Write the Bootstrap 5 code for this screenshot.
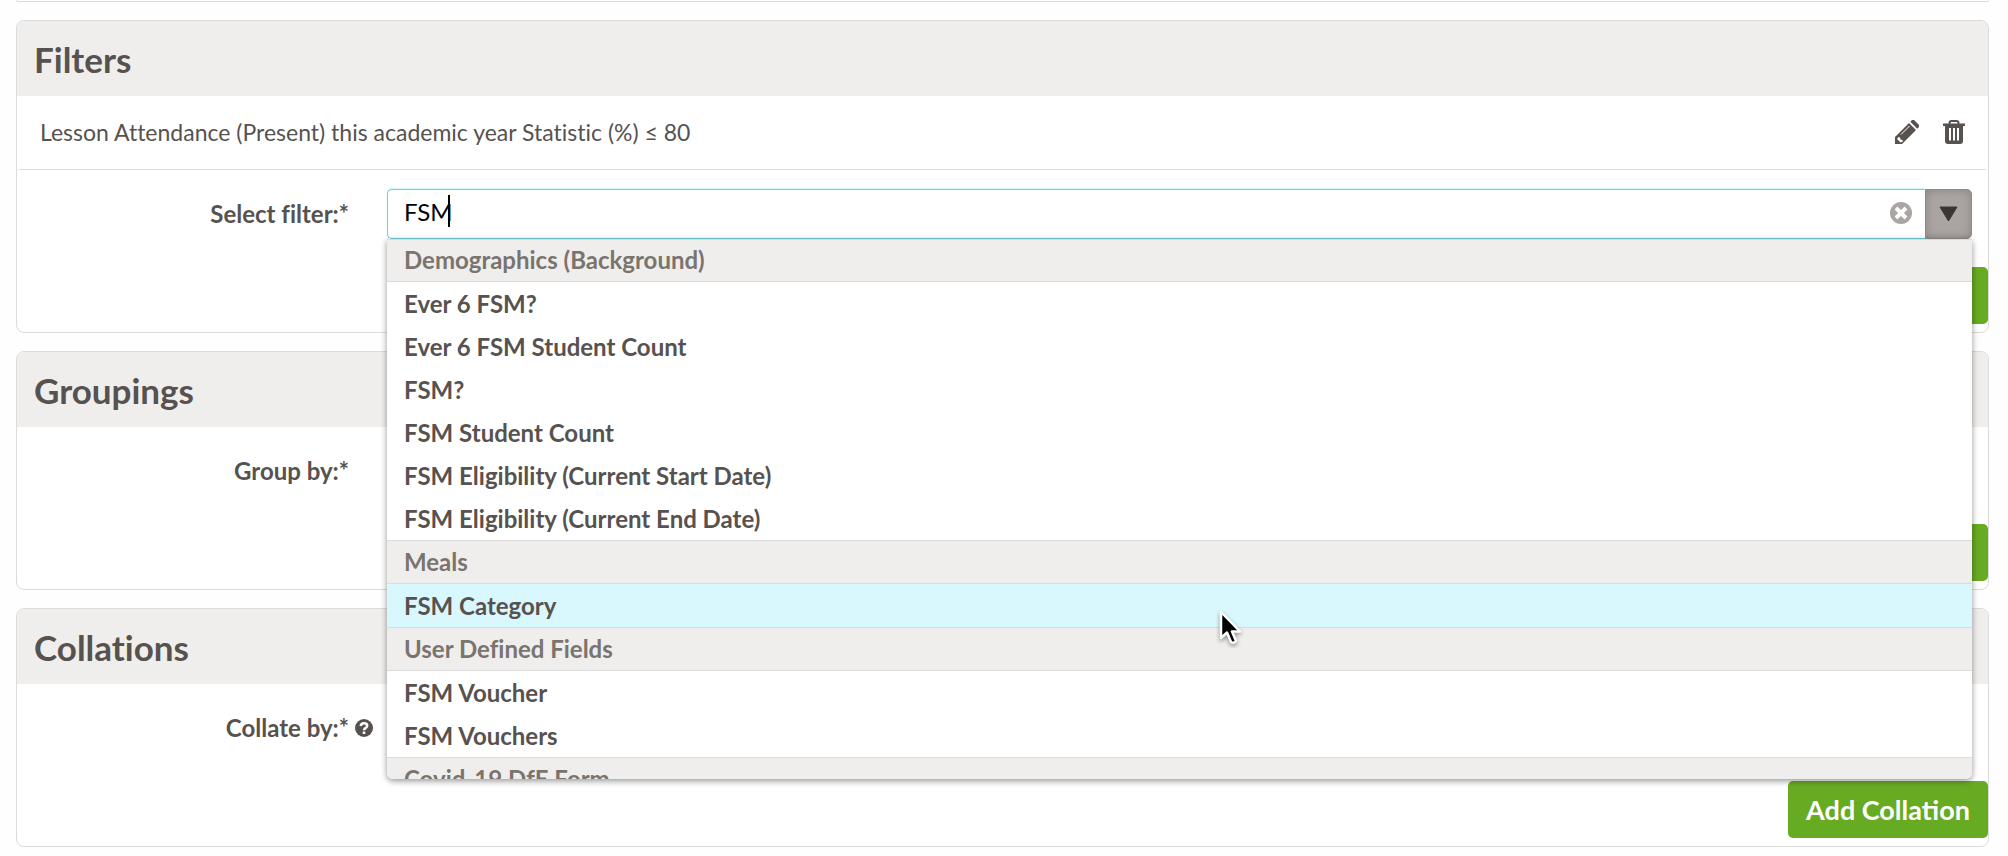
<!DOCTYPE html>
<html lang="en">
<head>
<meta charset="utf-8">
<meta name="viewport" content="width=device-width, initial-scale=1">
<title>Filters</title>
<link href="https://cdn.jsdelivr.net/npm/bootstrap@5.3.0/dist/css/bootstrap.min.css" rel="stylesheet">
<style>
:root { --ink: #57524f; --line: #dcdbdb; --panel: #efeeec; --green: #67ab22; }
body { font-family: Lato, "Open Sans", sans-serif; font-size: 24px; line-height: 32px; font-variant-ligatures: none; color: var(--ink); background: #fefefe; }
.page { padding: 0 19px 0 16px; }
.panel { border: 1px solid var(--line); border-radius: 8px; background: #fff; margin-bottom: 18px; }
.panel-cut { height: 2px; border-top: 0; }
.panel-title { background: var(--panel); border: 0; height: 75px; padding: 0 17px; border-radius: 7px 7px 0 0 !important; }
.panel-title h2 { font-size: 35px; line-height: 44px; font-weight: 700; margin: 0; }
.applied { height: 74px; margin: 0 2px; padding: 0 21px 2px; border-bottom: 1px solid var(--line); font-size: 23px; }
.icon-btn { border: 0; background: none; padding: 0; color: var(--ink); line-height: 0; }
.field { padding: 19px 16px 28px 0; }
.field-label { width: 332px; font-weight: 700; text-align: right; }
.field-aside { width: 38px; padding-left: 6px; line-height: 0; }
.combo { height: 50px; }
.combo input, .plain-select { width: 100%; height: 50px; border: 1px solid #6fcfdb; border-radius: 5px 0 0 5px; padding: 0 16px 5px; color: #000; background: #fff; font-size: 24px; outline: 0; }
.combo input { border-right: 0; box-shadow: 0 -1px 2px #c4f6fb; }
.plain-select { border-color: var(--line); border-radius: 5px; }
.caret-bar { position: absolute; left: 61px; top: 6px; width: 2px; height: 32px; background: #000; }
.clear-btn { position: absolute; right: 60px; top: 13px; }
.toggle-btn { width: 47px; flex: none; border: 1px solid #918b88; border-radius: 0 5px 5px 0; background: #aaa5a2; box-shadow: inset 0 0 10px #8a8481; padding: 0; line-height: 0; }
.menu { position: absolute; z-index: 5; top: 100%; left: 0; right: 0; height: 540px; overflow: hidden; background: #fff; border-radius: 0 0 6px 6px; box-shadow: 0 2px 6px rgba(0,0,0,.42); font-weight: 700; }
.menu li { height: 43px; padding: 0 17px; line-height: 44px; }
.menu .group { height: 44px; line-height: 41px; background: var(--panel); color: #7a746e; border: solid var(--line); border-width: 1px 0; }
.menu .group:first-child { height: 43px; line-height: 40px; }
.menu .picked { background: #d9f8fe; }
.add-btn { width: 200px; height: 57px; border: 0; border-radius: 5px; background: var(--green); color: #fff; font-size: 27px; font-weight: 700; padding: 0; margin-bottom: 8px; }
.pointer { position: absolute; z-index: 6; left: 829px; top: 421px; line-height: 0; pointer-events: none; }
</style>
</head>
<body>
<main class="page">
  <div class="panel panel-cut rounded-top-0"></div>

  <section class="card panel">
    <div class="card-header panel-title d-flex align-items-center"><h2>Filters</h2></div>
    <div class="applied d-flex align-items-center">
      <span class="flex-grow-1">Lesson Attendance (Present) this academic year Statistic (%) ≤ 80</span>
      <div class="d-flex gap-4">
        <button class="icon-btn" type="button" aria-label="Edit"><svg width="24" height="24" viewBox="0 0 24 24"><path fill="currentColor" d="M0 24V17L14 3l7 7L7 24zM15.300 1.700l1-1a2.500 2.500 0 0 1 3.500 0l3.500 3.500a2.500 2.500 0 0 1 0 3.500l-1 1z"/><path fill="none" stroke="#fff" stroke-width="1" d="M6 14.500 14.500 6"/><path fill="#fff" d="m2 19 1.500-2 1.500.5.5 2 2 .5.5 1.500-2.500 1z"/></svg></button>
        <button class="icon-btn" type="button" aria-label="Delete"><svg width="22" height="24" viewBox="0 0 22 24"><path fill="none" stroke="currentColor" stroke-width="2" d="M6.500 4V3q0-2 2-2h5q2 0 2 2v1"/><path fill="currentColor" d="M0 3.500h22v2.500h-2V21q0 3-3 3H5q-3 0-3-3V6H0z"/><path stroke="#fff" stroke-width="2" d="M7 8v12.500M11 8v12.500M15 8v12.500"/></svg></button>
      </div>
    </div>
    <div class="field d-flex align-items-center">
      <label class="field-label" for="filter">Select filter:*</label>
      <span class="field-aside"></span>
      <div class="combo d-flex flex-grow-1 position-relative">
        <input id="filter" type="text" value="FSM" autocomplete="off">
        <span class="caret-bar"></span>
        <button class="icon-btn clear-btn" type="button" aria-label="Clear"><svg width="22" height="22" viewBox="0 0 22 22"><circle cx="11" cy="11" r="11" fill="#aaa5a2"/><path stroke="#fff" stroke-width="4" d="m6 6 10 10m0-10-10 10"/></svg></button>
        <button class="toggle-btn" type="button" aria-label="Show options"><svg width="19" height="16" viewBox="0 0 19 16"><path fill="#3b3633" stroke="#3b3633" stroke-linejoin="round" d="M1 1h17L9.500 15z"/></svg></button>
        <ul class="menu list-unstyled m-0">
          <li class="group">Demographics (Background)</li>
          <li>Ever 6 FSM?</li>
          <li>Ever 6 FSM Student Count</li>
          <li>FSM?</li>
          <li>FSM Student Count</li>
          <li>FSM Eligibility (Current Start Date)</li>
          <li>FSM Eligibility (Current End Date)</li>
          <li class="group">Meals</li>
          <li class="picked">FSM Category</li>
          <li class="group">User Defined Fields</li>
          <li>FSM Voucher</li>
          <li>FSM Vouchers</li>
          <li class="group">Covid-19 DfE Form</li>
        </ul>
        <span class="pointer"><svg width="32" height="38" viewBox="0 0 32 38"><path fill="#000" stroke="#fff" stroke-width="2.500" stroke-linejoin="round" d="M5 2v26l6-5.500 4 9.500q2.500 2 5-1l-4-9.500h8z" style="filter:drop-shadow(0 2px 2px rgba(0,0,0,.4))"/></svg></span>
      </div>
    </div>
    <button class="add-btn align-self-end" type="button" aria-label="Add Filter"></button>
  </section>

  <section class="card panel">
    <div class="card-header panel-title d-flex align-items-center"><h2>Groupings</h2></div>
    <div class="field d-flex align-items-center">
      <label class="field-label" for="group">Group by:*</label>
      <span class="field-aside"></span>
      <div class="flex-grow-1"><select class="plain-select" id="group"></select></div>
    </div>
    <button class="add-btn align-self-end" type="button" aria-label="Add Grouping"></button>
  </section>

  <section class="card panel mb-0">
    <div class="card-header panel-title d-flex align-items-center"><h2>Collations</h2></div>
    <div class="field d-flex align-items-center">
      <label class="field-label" for="collate">Collate by:*</label>
      <span class="field-aside"><button class="icon-btn" type="button" aria-label="Help"><svg width="18" height="18" viewBox="0 0 18 18"><circle cx="9" cy="9" r="9" fill="currentColor"/><path fill="none" stroke="#fff" stroke-width="2.500" d="M5.700 7Q6 4.300 9 4.300q3.200 0 3.200 2.500 0 1.300-1.500 2.200Q9 9.800 9 11.300"/><path fill="#fff" d="M7.700 12.500h2.600V15H7.700z"/></svg></button></span>
      <div class="flex-grow-1"><select class="plain-select" id="collate"></select></div>
    </div>
    <button class="add-btn align-self-end" type="button">Add Collation</button>
  </section>
</main>
<script src="https://cdn.jsdelivr.net/npm/bootstrap@5.3.0/dist/js/bootstrap.bundle.min.js"></script>
</body>
</html>
